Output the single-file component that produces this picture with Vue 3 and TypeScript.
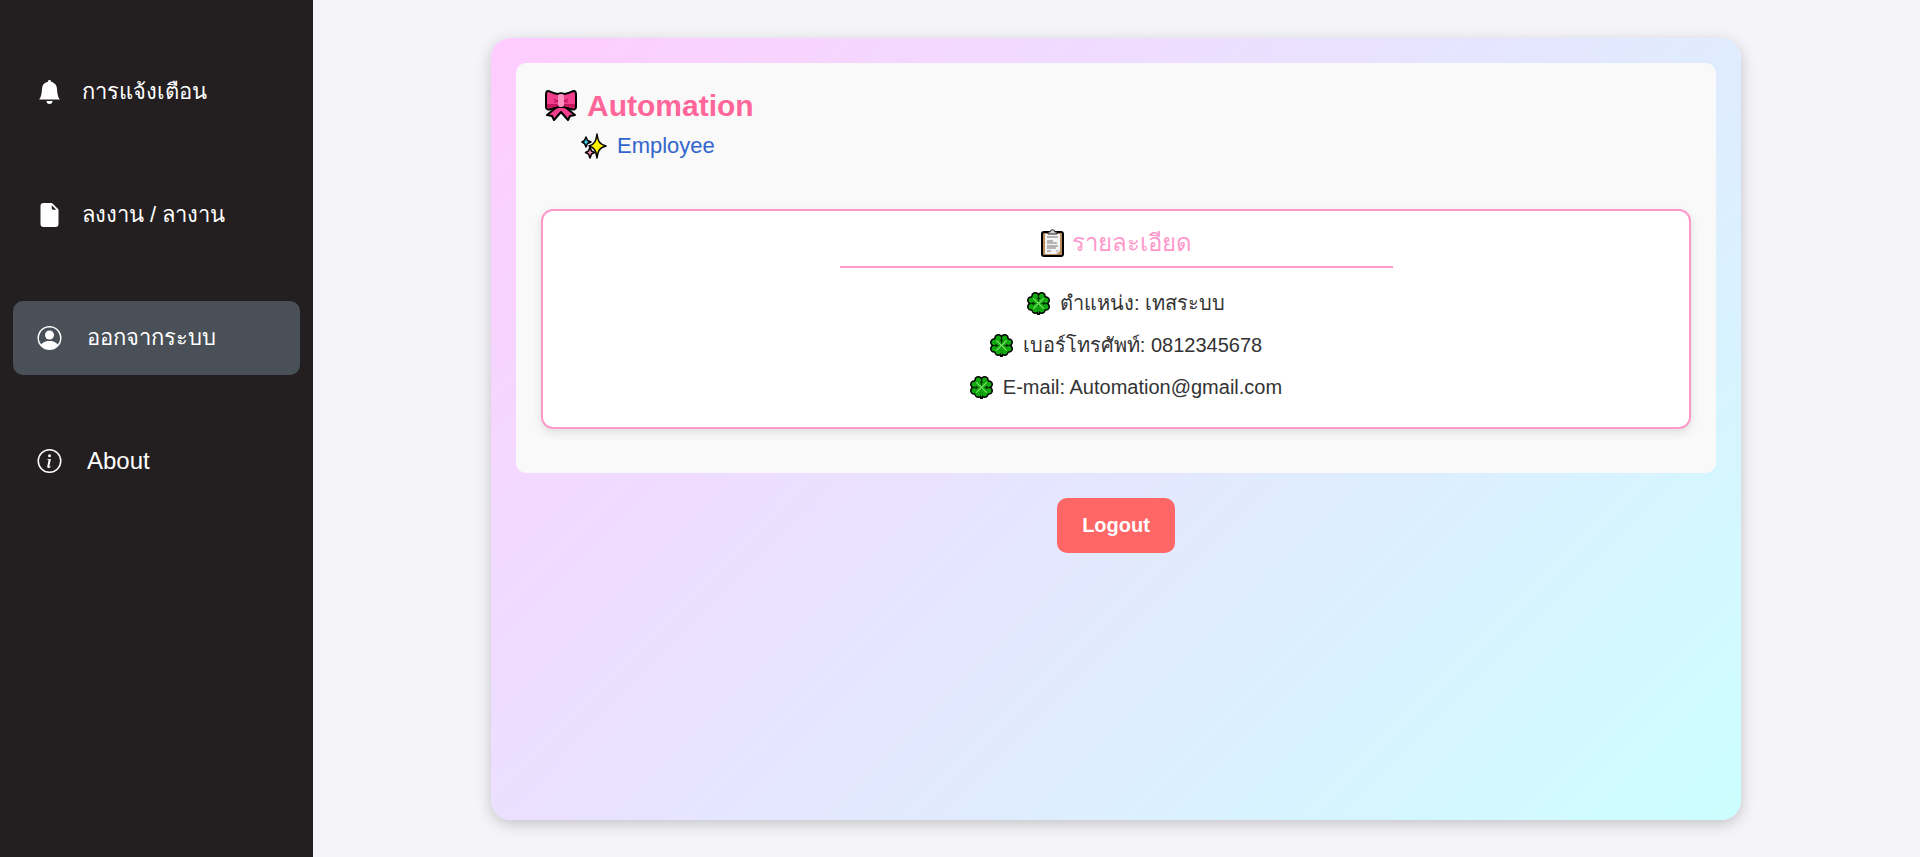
<script setup lang="ts">
interface MenuItem {
  label: string
  icon: 'bell' | 'file' | 'person' | 'info'
  active?: boolean
  wide?: boolean
  latin?: boolean
}

const menu: MenuItem[] = [
  { label: 'การแจ้งเตือน', icon: 'bell' },
  { label: 'ลงงาน / ลางาน', icon: 'file' },
  { label: 'ออกจากระบบ', icon: 'person', active: true, wide: true },
  { label: 'About', icon: 'info', wide: true, latin: true },
]

const details: string[] = [
  'ตำแหน่ง: เทสระบบ',
  'เบอร์โทรศัพท์: 0812345678',
  'E-mail: Automation@gmail.com',
]

const cloverLobes: [number, number][] = [
  [8, 4], [14, 4], [18, 8], [18, 14], [14, 17], [8, 17], [4, 14], [4, 8],
]
</script>

<template>
  <div class="layout">
    <nav class="sidebar">
      <ul class="menu">
        <li v-for="item in menu" :key="item.label">
          <a
            href="#"
            class="menu-link"
            :class="{ active: item.active, wide: item.wide, latin: item.latin }"
          >
            <svg class="menu-icon" viewBox="0 0 16 16" fill="currentColor" aria-hidden="true">
              <path
                v-if="item.icon === 'bell'"
                d="M8 16a2 2 0 0 0 2-2H6a2 2 0 0 0 2 2m.995-14.901a1 1 0 1 0-1.990 0A5 5 0 0 0 3 6c0 1.098-.5 6-2 7h14c-1.500-1-2-5.902-2-7 0-2.420-1.720-4.440-4.005-4.901"
              />
              <path
                v-else-if="item.icon === 'file'"
                d="M4 0h5.293A1 1 0 0 1 10 .293L13.707 4a1 1 0 0 1 .293.707V14a2 2 0 0 1-2 2H4a2 2 0 0 1-2-2V2a2 2 0 0 1 2-2m5.500 1.500v2a1 1 0 0 0 1 1h2z"
              />
              <template v-else-if="item.icon === 'person'">
                <path d="M11 6a3 3 0 1 1-6 0 3 3 0 0 1 6 0" />
                <path
                  fill-rule="evenodd"
                  d="M0 8a8 8 0 1 1 16 0A8 8 0 0 1 0 8m8-7a7 7 0 0 0-5.468 11.370C3.242 11.226 4.805 10 8 10s4.757 1.225 5.468 2.370A7 7 0 0 0 8 1"
                />
              </template>
              <template v-else>
                <path d="M8 15A7 7 0 1 1 8 1a7 7 0 0 1 0 14m0 1A8 8 0 1 0 8 0a8 8 0 0 0 0 16" />
                <path
                  d="m8.930 6.588-2.290.287-.082.380.450.083c.294.070.352.176.288.469l-.738 3.468c-.194.897.105 1.319.808 1.319.545 0 1.178-.252 1.465-.598l.088-.416c-.200.176-.492.246-.686.246-.275 0-.375-.193-.304-.533zM9 4.500a1 1 0 1 1-2 0 1 1 0 0 1 2 0"
                />
              </template>
            </svg>
            <span>{{ item.label }}</span>
          </a>
        </li>
      </ul>
    </nav>

    <main class="content">
      <section class="profile">
        <div class="panel">
          <h1 class="name">
            <svg class="bow" viewBox="0 0 32 32" aria-hidden="true">
              <g stroke="#000" stroke-width="2" stroke-linejoin="round">
                <path d="M13 16 2 25l5 1 2 4 7-8 7 8 2-4 5-1-11-9z" fill="#f23f8d" />
                <path
                  d="M13 4C9 4 5 1 3 1 1 1 1 3 1 5v12c0 3 3 3 5 2l7-2h6l7 2c2 1 5 1 5-2V5c0-2 0-4-2-4s-6 3-10 3c-2-1-4-1-6 0z"
                  fill="#f23f8d"
                />
              </g>
              <path d="M2 14h11v2l-8 2c-2 0-3 0-3-1zM30 14H19v2l8 2c2 0 3 0 3-1z" fill="#c6165f" />
              <path d="M9 9l4 2-4 1M23 9l-4 2 4 1" fill="none" stroke="#b80c55" stroke-width="1" />
              <rect x="13" y="4" width="6" height="13" rx="2" fill="#ff8fbe" />
            </svg>
            Automation
          </h1>
          <p class="role">
            <svg class="sparkles" viewBox="0 0 26 26" aria-hidden="true">
              <g stroke="#000" stroke-width="1.500" stroke-linejoin="round">
                <path d="M9 14l1.500 4 3 1.500-3 1.500L9 25l-1.500-4-3-1.500 3-1.500z" fill="#ff94bd" />
                <path d="M5 4l1.500 3.500L10 9 6.500 10.500 5 14l-1.500-3.500L1 9l2.500-1.500z" fill="#3fd1f5" />
                <path d="M16 1c1 7 2 10 9 12-7 2-8 5-9 12-1-7-2-10-8-12 6-2 7-5 8-12z" fill="#fff200" />
              </g>
            </svg>
            Employee
          </p>

          <div class="details">
            <h2 class="details-title">
              <svg class="clipboard" viewBox="0 0 23 28" aria-hidden="true">
                <rect x="1" y="3" width="21" height="24" rx="2" fill="#b98a5a" stroke="#000" stroke-width="2" />
                <path d="M4 5h15v17l-3 3H4z" fill="#f4f4f4" />
                <path d="M19 21l-4 4v-4z" fill="#cfcfcf" />
                <path d="M7 5V3h2c0-3 5-3 5 0h2v2z" fill="#d0d0d0" stroke="#222" stroke-width="1" />
                <path d="M6 8h11M6 12h6M6 14h10M6 17h11M6 19h9M6 22h4" stroke="#777" stroke-width="1" />
              </svg>
              รายละเอียด
            </h2>
            <ul class="detail-list">
              <li v-for="line in details" :key="line">
                <svg class="clover" viewBox="0 0 22 22" aria-hidden="true">
                  <circle v-for="[x, y] in cloverLobes" :key="`edge-${x}-${y}`" :cx="x" :cy="y" r="4" />
                  <path d="M11 14v7" stroke="#000" stroke-width="3" stroke-linecap="round" />
                  <circle
                    v-for="[x, y] in cloverLobes"
                    :key="`leaf-${x}-${y}`"
                    :cx="x"
                    :cy="y"
                    r="2.500"
                    fill="#12a80f"
                  />
                  <path d="M6 4l5 3 5-3 2 2-3 5 3 5-2 2-5-3-5 3-2-2 3-5-3-5z" fill="#12a80f" />
                  <path d="M11 3v6M3 11h5M19 11h-5M11 12v3" stroke="#032d03" stroke-width="1" />
                  <path d="M11 13v7" stroke="#12a80f" stroke-width="1" />
                  <path d="M6 6l10 10M16 6 6 16" stroke="#83e66d" stroke-width="1" />
                </svg>
                {{ line }}
              </li>
            </ul>
          </div>
        </div>
        <button type="button" class="logout">Logout</button>
      </section>
    </main>
  </div>
</template>

<style>
body {
  margin: 0;
  background: #f4f4f9;
}
</style>

<style scoped>
.layout {
  display: flex;
  min-height: 100vh;
  font-family: "Liberation Sans", Arial, sans-serif;
  color: #333;
}

.layout *,
.layout {
  box-sizing: border-box;
}

.sidebar {
  flex: 0 0 313px;
  background: #231f20;
  padding: 55px 13px;
}

.menu {
  display: flex;
  flex-direction: column;
  gap: 49px;
  margin: 0;
  padding: 0;
  list-style: none;
}

.menu-link {
  display: flex;
  align-items: center;
  gap: 20px;
  height: 74px;
  padding: 0 24px;
  border-radius: 10px;
  color: #fff;
  font-size: 22px;
  line-height: 32px;
  text-decoration: none;
}

.menu-link.wide {
  gap: 25px;
}

.menu-link.latin {
  font-size: 24px;
}

.menu-link.active {
  background: #495057;
}

.menu-icon {
  flex: none;
  width: 25px;
  height: 24px;
}

.content {
  flex: 1;
  display: flex;
  justify-content: center;
  padding: 38px 25px 37px 24px;
}

.profile {
  display: flex;
  flex-direction: column;
  align-items: center;
  gap: 25px;
  width: 100%;
  max-width: 1250px;
  padding: 25px;
  border-radius: 20px;
  background: linear-gradient(135deg, #ffccff, #ccffff);
  box-shadow: 0 4px 15px rgba(0, 0, 0, 0.2);
}

.panel {
  width: 100%;
  padding: 25px 25px 44px;
  border-radius: 10px;
  background: #f9f9f9;
}

.name {
  display: flex;
  align-items: center;
  gap: 10px;
  margin: 0;
  padding-left: 4px;
  color: #ff6699;
  font-size: 30px;
  line-height: 36px;
}

.bow {
  width: 32px;
  height: 32px;
}

.role {
  display: flex;
  align-items: center;
  gap: 10px;
  margin: 8px 0 0 40px;
  color: #3366cc;
  font-size: 22px;
  line-height: 28px;
}

.sparkles {
  width: 26px;
  height: 26px;
}

.details {
  display: flex;
  flex-direction: column;
  align-items: center;
  margin-top: 49px;
  padding: 16px 20px 19px;
  border: 2px solid #ff99cc;
  border-radius: 12px;
  background: #fff;
  box-shadow: 0 4px 10px rgba(0, 0, 0, 0.1);
}

.details-title {
  display: flex;
  justify-content: center;
  align-items: center;
  gap: 8px;
  width: 50%;
  margin: 0 0 14px;
  padding-bottom: 7px;
  border-bottom: 2px solid #ff99cc;
  color: #ff99cc;
  font-size: 24px;
  font-weight: 400;
  line-height: 32px;
}

.clipboard {
  width: 23px;
  height: 28px;
}

.detail-list {
  display: flex;
  flex-direction: column;
  align-items: center;
  margin: 0;
  padding: 0 0 0 20px;
  list-style: none;
}

.detail-list li {
  display: flex;
  align-items: center;
  gap: 10px;
  font-size: 20px;
  line-height: 42px;
}

.clover {
  width: 23px;
  height: 23px;
}

.logout {
  padding: 16px 25px;
  border: 0;
  border-radius: 10px;
  background: #ff6666;
  color: #fff;
  font-family: inherit;
  font-size: 20px;
  font-weight: 700;
  line-height: 23px;
  cursor: pointer;
}
</style>
